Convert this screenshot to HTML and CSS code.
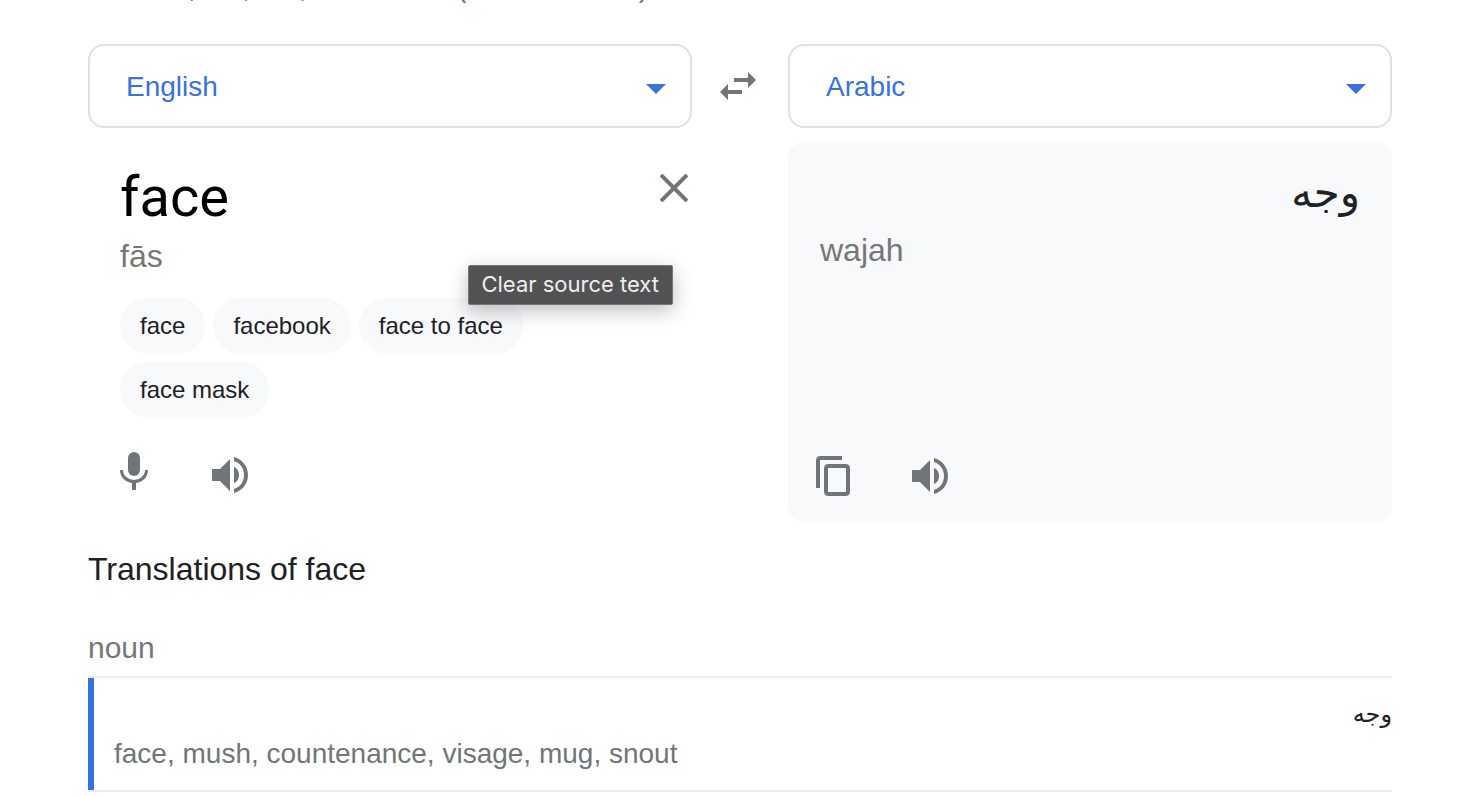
FILE: index.html
```
<!DOCTYPE html>
<html lang="en">
<head>
  <meta charset="utf-8">
  <meta name="viewport" content="width=device-width,initial-scale=1">
  <title>face in arabic</title>
  <link rel="stylesheet" href="styles.css">
</head>
<body>
  <div class="stats">About 1,110,000,000 results (0.50 seconds)</div>

  <main class="translator">
    <div class="languages">
      <div class="select-box">
        <select aria-label="Source language">
          <option>English</option>
        </select>
        <svg class="caret" viewBox="0 0 20 10"><path d="M0 0h20L10 10z"/></svg>
      </div>
      <button class="swap" aria-label="Swap languages">
        <svg width="36" height="28" viewBox="0 0 36 28"><path d="M28 0l8 8-8 8v-6H14V6h14zM8 12v6h14v4H8v6l-8-8z"/></svg>
      </button>
      <div class="select-box">
        <select aria-label="Target language">
          <option>Arabic</option>
        </select>
        <svg class="caret" viewBox="0 0 20 10"><path d="M0 0h20L10 10z"/></svg>
      </div>
    </div>

    <div class="panels">
      <section class="source">
        <div class="source-row">
          <input class="source-text" type="text" value="face" aria-label="Source text">
          <button class="clear" aria-label="Clear source text">
            <svg width="28" height="28" viewBox="0 0 28 28"><path d="M1 1l26 26M27 1L1 27" fill="none" stroke="#70757a" stroke-width="4"/></svg>
          </button>
          <span class="tooltip" role="tooltip">Clear source text</span>
        </div>
        <div class="phonetic">fās</div>
        <div class="chips">
          <button class="chip">face</button>
          <button class="chip">facebook</button>
          <button class="chip">face to face</button>
          <button class="chip">face mask</button>
        </div>
        <div class="tools">
          <button aria-label="Translate by voice">
            <svg class="mic" width="28" height="38" viewBox="0 0 28 38"><rect x="8" width="12" height="24" rx="6"/><path d="M0 18h3a11 10 0 0 0 22 0h3c0 7-5 12-12 13V38h-4v-7C5 30 0 25 0 18z"/></svg>
          </button>
          <button aria-label="Listen">
            <svg width="36" height="36" viewBox="0 0 36 36"><path d="M0 12v12h8l10 10V2L8 12zM22 10v16c3-1 5-4 5-8s-2-7-5-8zM22 0v4c6 2 10 7 10 14s-4 12-10 14v4c8-2 14-9 14-18S30 2 22 0z"/></svg>
          </button>
        </div>
      </section>

      <section class="target">
        <div class="target-text" lang="ar" dir="rtl">وجه</div>
        <div class="phonetic">wajah</div>
        <div class="tools">
          <button aria-label="Copy">
            <svg width="34" height="40" viewBox="0 0 34 40"><path d="M26 0H4C2 0 0 2 0 4v28h4V4h22zM30 8H12c-2 0-4 2-4 4v24c0 2 2 4 4 4h18c2 0 4-2 4-4V12c0-2-2-4-4-4zm0 28H12V12h18z"/></svg>
          </button>
          <button aria-label="Listen">
            <svg width="36" height="36" viewBox="0 0 36 36"><path d="M0 12v12h8l10 10V2L8 12zM22 10v16c3-1 5-4 5-8s-2-7-5-8zM22 0v4c6 2 10 7 10 14s-4 12-10 14v4c8-2 14-9 14-18S30 2 22 0z"/></svg>
          </button>
        </div>
      </section>
    </div>

    <h2>Translations of face</h2>
    <h3>noun</h3>
    <div class="entries">
      <div class="entry">
        <div class="entry-word" lang="ar" dir="rtl">وجه</div>
        <div class="entry-meanings">face, mush, countenance, visage, mug, snout</div>
      </div>
    </div>
  </main>
</body>
</html>
```
FILE: styles.css
```
* {
  box-sizing: border-box;
}

body {
  margin: 0;
  padding: 0 68px 0 88px;
  background: #fff;
  color: #202124;
  font-family: "Liberation Sans", Arial, sans-serif;
  font-size: 28px;
  overflow: hidden;
}

button {
  border: 0;
  padding: 0;
  background: none;
  color: inherit;
  font: inherit;
  cursor: pointer;
}

svg {
  display: block;
  fill: #70757a;
}

/* scrolled almost out of view */
.stats {
  margin-top: -29px;
  margin-bottom: 41px;
  color: #70757a;
  font-size: 29px;
  line-height: 32px;
}

.languages {
  display: grid;
  grid-template-columns: 1fr 96px 1fr;
  align-items: center;
}

.select-box {
  display: grid;
  align-items: center;
}

.select-box select,
.caret {
  grid-area: 1 / 1;
}

.select-box select {
  appearance: none;
  width: 100%;
  height: 84px;
  padding: 0 36px;
  border: 2px solid #dfe1e5;
  border-radius: 16px;
  background: #fff;
  color: #3871e0;
  font: inherit;
}

.caret {
  width: 20px;
  height: 10px;
  margin-right: 26px;
  margin-top: 6px;
  justify-self: end;
  fill: #3871e0;
  pointer-events: none;
}

.swap {
  justify-self: center;
  padding-right: 4px;
}

.panels {
  display: grid;
  grid-template-columns: minmax(0, 1fr) minmax(0, 1fr);
  gap: 96px;
  margin-top: 14px;
}

.source,
.target {
  display: flex;
  flex-direction: column;
  min-height: 380px;
  padding: 24px 32px;
}

.source {
  padding-right: 0;
}

.target {
  padding-bottom: 26px;
  border-radius: 16px;
  background: #f8f9fb;
}

.source-row {
  position: relative;
  display: flex;
  align-items: flex-start;
  padding-right: 4px;
}

.source-text {
  flex: 1;
  min-width: 0;
  height: 62px;
  padding: 0;
  border: 0;
  outline: 0;
  background: none;
  color: #000;
  font-family: Roboto, sans-serif;
  font-size: 56px;
}

.clear {
  padding-top: 8px;
}

.tooltip {
  position: absolute;
  top: 99px;
  right: 19px;
  padding: 5px 13px 7px 12px;
  border: 1px solid #777;
  border-radius: 2px;
  background: #525254;
  box-shadow: 0 6px 20px rgba(0, 0, 0, 0.25);
  color: #eee;
  font-family: Inter, sans-serif;
  font-size: 22px;
  line-height: 26px;
  white-space: nowrap;
}

.phonetic {
  color: #777;
  font-size: 32px;
  line-height: 36px;
}

.source .phonetic {
  margin-top: 10px;
}

.chips {
  display: flex;
  flex-wrap: wrap;
  gap: 8px;
  max-width: 440px;
  margin-top: 24px;
}

.chip {
  height: 56px;
  padding: 0 20px;
  border-radius: 28px;
  background: #f8f9fb;
  font-size: 24px;
}

.tools {
  display: flex;
  align-items: center;
  gap: 62px;
  margin-top: auto;
}

.target .tools {
  margin-left: -4px;
}

.source .tools {
  gap: 64px;
}

.mic {
  margin-bottom: 8px;
}

.target-text {
  margin-bottom: 12px;
  font-family: "DejaVu Sans", sans-serif;
  font-size: 42px;
  line-height: 54px;
}

h2 {
  margin: 28px 0 0;
  font-size: 32px;
  font-weight: 400;
  line-height: 38px;
}

h3 {
  margin: 42px 0 10px;
  color: #777;
  font-size: 30px;
  font-weight: 400;
  line-height: 36px;
}

.entries {
  border-top: 2px solid #ebebeb;
  border-bottom: 2px solid #ebebeb;
}

.entry {
  padding: 18px 0 18px 20px;
  border-left: 6px solid #3871e0;
}

.entry-word {
  font-family: "DejaVu Sans", sans-serif;
  font-size: 24px;
  line-height: 36px;
}

.entry-meanings {
  margin-top: 4px;
  color: #70757a;
  line-height: 36px;
}
```
